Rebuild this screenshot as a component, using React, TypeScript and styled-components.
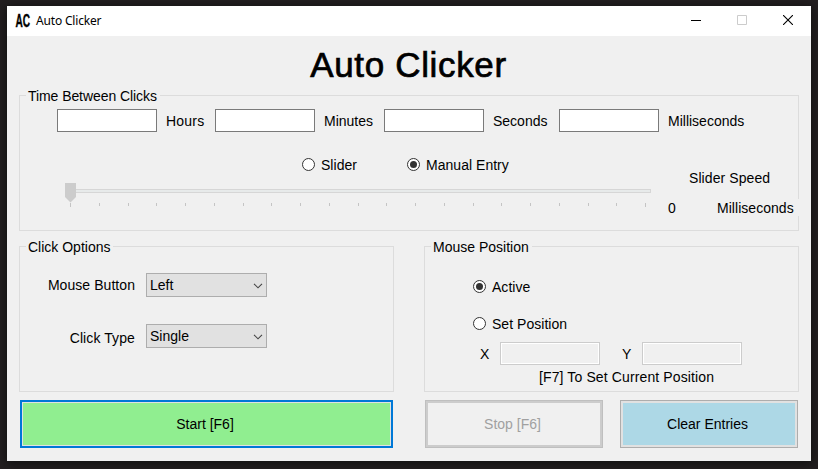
import React from "react";
import styled, { createGlobalStyle } from "styled-components";

const GlobalStyle = createGlobalStyle`
  * { box-sizing: border-box; }
  html, body { margin: 0; padding: 0; background: #211e1f; }
  body { font-family: "Liberation Sans", Arial, sans-serif; font-size: 14px; line-height: 16px; color: #000; }
`;

const Desktop = styled.div`
  width: 818px;
  height: 469px;
  padding: 6px 7px 8px;
  background: #231f20;
  overflow: hidden;
`;

const Window = styled.main`
  display: flex;
  flex-direction: column;
  height: 455px;
  background: #f0f0f0;
  box-shadow: 0 2px 9px 1px #101010;
`;

const TitleBar = styled.header`
  display: flex;
  align-items: center;
  height: 30px;
  padding-left: 8px;
  background: #fff;
`;

const AppIcon = styled.svg`
  width: 18px;
  height: 20px;
  margin-right: 3px;
  font: bold 18px "Liberation Sans", Arial, sans-serif;
`;

const Caption = styled.span`
  flex: 1;
  font: 12px/16px "Noto Sans", "Open Sans", sans-serif;
  letter-spacing: -0.18px;
`;

const WindowButton = styled.button`
  width: 46px;
  height: 30px;
  padding: 0;
  border: 0;
  background: none;
  display: grid;
  place-items: center;
`;

const Glyph = styled.svg`
  display: block;
  width: 10px;
  height: 10px;
  margin-bottom: 2px;
`;

const Content = styled.div`
  display: flex;
  flex-direction: column;
  padding: 0 12px;
`;

const Heading = styled.h1`
  margin: 0;
  height: 59px;
  padding: 9px 1px 0 0;
  font-size: 35px;
  font-weight: 400;
  line-height: 40px;
  letter-spacing: 0.65px;
  text-align: center;
  -webkit-text-stroke: 0.7px #000;
`;

const Group = styled.section<{ $height: number; $width?: number }>`
  display: flex;
  flex-direction: column;
  width: ${(p) => (p.$width ? `${p.$width}px` : "auto")};
  height: ${(p) => p.$height}px;
  border: 1px solid #dcdcdc;
`;

const Legend = styled.div<{ $width: number }>`
  width: ${(p) => p.$width}px;
  height: 16px;
  margin: -8px 0 0 6px;
  padding-left: 2px;
  background: #f0f0f0;
  white-space: nowrap;
`;

const Columns = styled.div<{ $gap: number; $top: number }>`
  display: flex;
  gap: ${(p) => p.$gap}px;
  margin-top: ${(p) => p.$top}px;
`;

const Text = styled.span<{ $spacing?: number }>`
  letter-spacing: ${(p) => p.$spacing ?? 0}px;
  white-space: nowrap;
`;

const TimeFields = styled.div`
  display: flex;
  padding: 5px 0 0 37px;
`;

const TimeField = styled.label<{ $width: number }>`
  display: flex;
  align-items: center;
  gap: 9px;
  width: ${(p) => p.$width}px;
  height: 23px;
`;

const Input = styled.input`
  flex: none;
  width: 100px;
  height: 23px;
  padding: 2px 4px;
  font: inherit;
  background: #fff;
  border: 1px solid #7a7a7a;
  border-radius: 0;
  &:disabled {
    background: #f0f0f0;
    border-color: #ccc;
    box-shadow: inset 0 0 0 1px #fff;
  }
`;

const SpeedArea = styled.div`
  display: flex;
`;

const SpeedControls = styled.div`
  flex: none;
  width: 648px;
`;

const RadioRow = styled.div`
  display: flex;
  padding: 25px 0 0 282px;
`;

const RadioLabel = styled.label<{ $width?: number }>`
  display: flex;
  gap: 6px;
  width: ${(p) => (p.$width ? `${p.$width}px` : "auto")};
  height: 16px;
`;

const RadioMark = styled.svg`
  flex: none;
  width: 13px;
  height: 13px;
  margin-top: 1px;
`;

const Slider = styled.svg`
  display: block;
  width: 588px;
  height: 26px;
  margin: 10px 0 0 44px;
`;

const Readout = styled.div`
  flex: none;
  width: 131px;
  padding-top: 38px;
`;

const ReadoutTitle = styled.div`
  padding-left: 21px;
`;

const ReadoutValue = styled.div`
  display: flex;
  height: 17px;
  margin-top: 13px;
  padding-top: 1px;
  width: 131px;
  background: #f0f0f0;
`;

const Count = styled.span`
  width: 49px;
`;

const OptionRow = styled.div<{ $top: number; $drop: number }>`
  display: flex;
  gap: 11px;
  margin-top: ${(p) => p.$top}px;
  > span {
    width: 115px;
    padding-top: ${(p) => p.$drop}px;
    text-align: right;
  }
`;

const Select = styled.div`
  display: flex;
  justify-content: space-between;
  width: 121px;
  height: 24px;
  padding: 3px 3px 0;
  background: #e1e1e1;
  border: 1px solid #adadad;
`;

const Chevron = styled.svg`
  width: 10px;
  height: 6px;
  margin-top: 6px;
`;

const PositionChoices = styled.div`
  display: flex;
  flex-direction: column;
  gap: 21px;
  padding: 24px 0 0 48px;
`;

const Coordinates = styled.div`
  display: flex;
  margin-top: 10px;
  padding-left: 55px;
`;

const Coordinate = styled.label`
  display: flex;
  align-items: center;
  width: 142px;
  > span {
    width: 20px;
    padding-top: 1px;
  }
`;

const Hint = styled.div`
  padding: 4px 0 0 114px;
`;

const Button = styled.button<{ $width: number; $tone: "start" | "stop" | "clear" }>`
  width: ${(p) => p.$width}px;
  height: 48px;
  padding: 0 3px 1px 0;
  font: inherit;
  color: #000;
  background: ${(p) => ({ start: "#90ee90", stop: "#f0f0f0", clear: "#add8e6" })[p.$tone]};
  border: ${(p) => ({ start: "2px solid #0078d7", stop: "1px solid #bfbfbf", clear: "1px solid #adadad" })[p.$tone]};
  border-radius: 0;
  box-shadow: inset 0 0 0 ${(p) => ({ start: "1px #e1e1e1", stop: "2px #ccc", clear: "2px #e1e1e1" })[p.$tone]};
  &:disabled { color: #a0a0a0; }
`;

const Actions = styled.div`
  display: flex;
  margin-top: 8px;
  padding-left: 1px;
`;

const RightActions = styled.div`
  display: flex;
  gap: 17px;
  margin-left: 32px;
`;

function Radio({ label, checked, width }: { label: string; checked?: boolean; width?: number }) {
  return (
    <RadioLabel $width={width}>
      <RadioMark viewBox="0 0 13 13">
        <circle cx="6.5" cy="6.5" r="6" fill="#fff" stroke="#333" />
        {checked && <circle cx="6.5" cy="6.5" r="3.5" fill="#333" />}
      </RadioMark>
      <Text $spacing={0.03}>{label}</Text>
    </RadioLabel>
  );
}

function ComboBox({ value }: { value: string }) {
  return (
    <Select>
      <Text>{value}</Text>
      <Chevron viewBox="0 0 10 6">
        <path d="M1 0.8 L5 4.8 L9 0.8" fill="none" stroke="#444" strokeWidth="1.1" />
      </Chevron>
    </Select>
  );
}

const ticks = Array.from({ length: 21 }, (_, i) => Math.round(6 + i * 28.75));

const timeFields = [
  { label: "Hours", width: 158, spacing: 0.2 },
  { label: "Minutes", width: 169, spacing: 0 },
  { label: "Seconds", width: 175, spacing: 0 },
  { label: "Milliseconds", width: 190, spacing: 0 },
];

export default function App() {
  return (
    <Desktop>
      <GlobalStyle />
      <Window>
        <TitleBar>
          <AppIcon viewBox="0 0 18 20">
            <g transform="translate(0.6 16) scale(0.56 1)" stroke="#000" strokeWidth="0.4">
              <text>AC</text>
            </g>
          </AppIcon>
          <Caption>Auto Clicker</Caption>
          <WindowButton aria-label="Minimize">
            <Glyph viewBox="0 0 10 10"><path d="M0 5.5H10" stroke="#000" /></Glyph>
          </WindowButton>
          <WindowButton aria-label="Maximize" disabled>
            <Glyph viewBox="0 0 10 10"><path d="M.5.5H9.5V9.5H.5Z" fill="none" stroke="#ccc" /></Glyph>
          </WindowButton>
          <WindowButton aria-label="Close">
            <Glyph viewBox="0 0 10 10"><path d="M0 0L10 10M10 0L0 10" stroke="#000" strokeWidth="1.1" /></Glyph>
          </WindowButton>
        </TitleBar>
        <Content>
          <Heading>Auto Clicker</Heading>
          <Group $height={136}>
            <Legend $width={134}><Text $spacing={-0.07}>Time Between Clicks</Text></Legend>
            <TimeFields>
              {timeFields.map((f) => (
                <TimeField key={f.label} $width={f.width}>
                  <Input />
                  <Text $spacing={f.spacing}>{f.label}</Text>
                </TimeField>
              ))}
            </TimeFields>
            <SpeedArea>
              <SpeedControls>
                <RadioRow>
                  <Radio label="Slider" width={105} />
                  <Radio label="Manual Entry" checked />
                </RadioRow>
                <Slider viewBox="0 0 588 26">
                  <rect x="1.5" y="6.5" width="585" height="3" fill="#e7eaea" stroke="#d6d6d6" />
                  <path d="M1 0H12V14L6.5 19.5L1 14Z" fill="#ccc" />
                  {ticks.map((x, i) => (
                    <rect key={x} x={x} y="20" width="1" height={i === 0 || i === 20 ? 4 : 3} fill="#c4c4c4" />
                  ))}
                </Slider>
              </SpeedControls>
              <Readout>
                <ReadoutTitle><Text $spacing={0.08}>Slider Speed</Text></ReadoutTitle>
                <ReadoutValue>
                  <Count>0</Count>
                  <Text $spacing={0.04}>Milliseconds</Text>
                </ReadoutValue>
              </Readout>
            </SpeedArea>
          </Group>
          <Columns $gap={30} $top={15}>
            <Group $height={146} $width={375}>
              <Legend $width={87}><Text>Click Options</Text></Legend>
              <OptionRow $top={18} $drop={4}>
                <Text $spacing={0.06}>Mouse Button</Text>
                <ComboBox value="Left" />
              </OptionRow>
              <OptionRow $top={27} $drop={6}>
                <Text $spacing={0.1}>Click Type</Text>
                <ComboBox value="Single" />
              </OptionRow>
            </Group>
            <Group $height={146} $width={375}>
              <Legend $width={101}><Text>Mouse Position</Text></Legend>
              <PositionChoices>
                <Radio label="Active" checked />
                <Radio label="Set Position" />
              </PositionChoices>
              <Coordinates>
                <Coordinate><Text>X</Text><Input disabled /></Coordinate>
                <Coordinate><Text>Y</Text><Input disabled /></Coordinate>
              </Coordinates>
              <Hint><Text $spacing={0.12}>[F7] To Set Current Position</Text></Hint>
            </Group>
          </Columns>
          <Actions>
            <Button $width={373} $tone="start">Start [F6]</Button>
            <RightActions>
              <Button $width={178} $tone="stop" disabled>Stop [F6]</Button>
              <Button $width={178} $tone="clear">Clear Entries</Button>
            </RightActions>
          </Actions>
        </Content>
      </Window>
    </Desktop>
  );
}
